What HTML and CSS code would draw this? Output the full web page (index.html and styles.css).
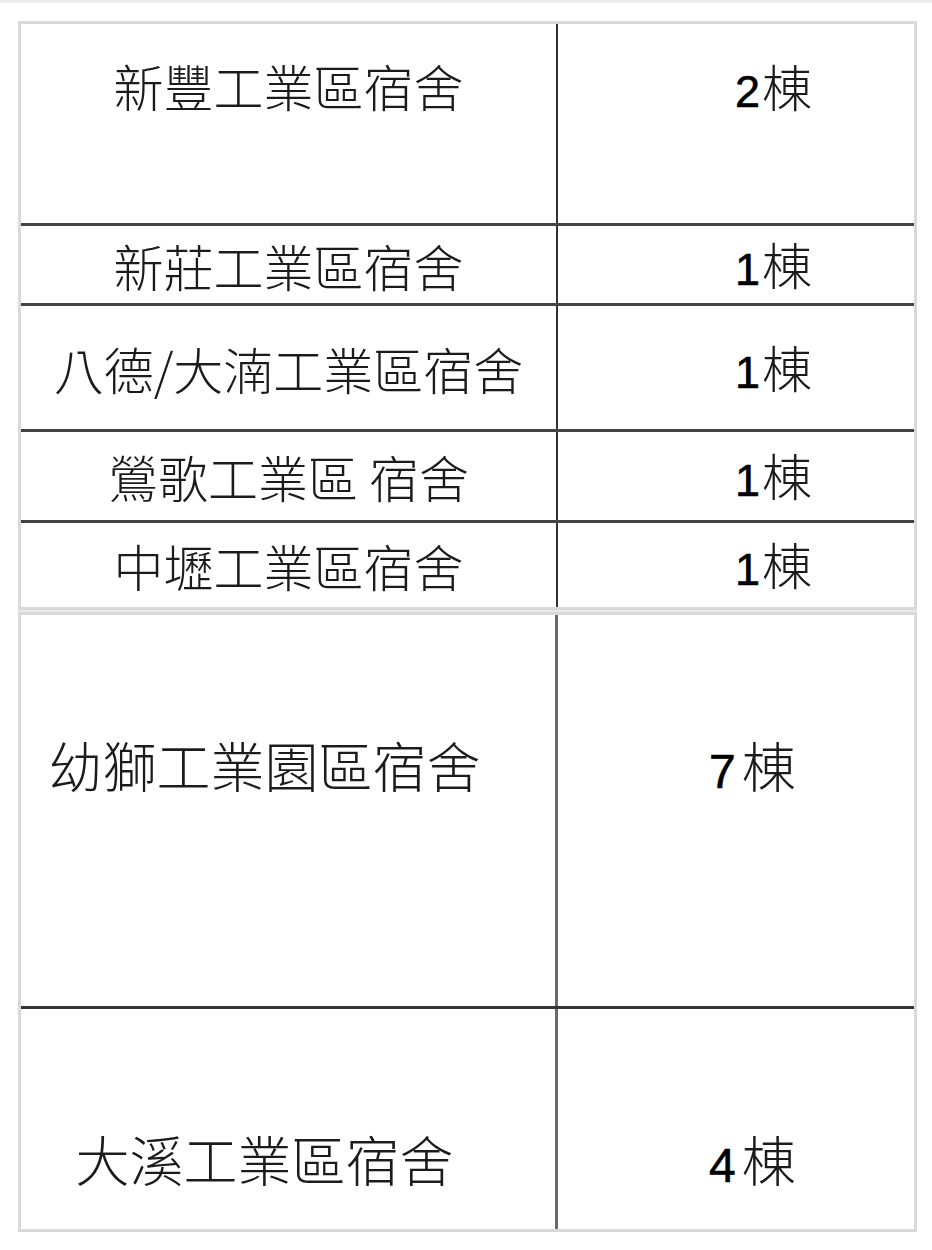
FILE: index.html
```html
<!DOCTYPE html>
<html lang="zh-Hant">
<head>
<meta charset="utf-8">
<title>工業區宿舍</title>
<link rel="stylesheet" href="styles.css">
</head>
<body>
<div class="topbar"></div>
<div class="sheet sheet-a">
  <div class="row r1 top">
    <div class="name">新豐工業區宿舍</div>
    <div class="count"><span class="val"><span class="num">2</span>棟</span></div>
  </div>
  <div class="row r2">
    <div class="name">新莊工業區宿舍</div>
    <div class="count"><span class="val"><span class="num">1</span>棟</span></div>
  </div>
  <div class="row r3">
    <div class="name">八德/大湳工業區宿舍</div>
    <div class="count"><span class="val"><span class="num">1</span>棟</span></div>
  </div>
  <div class="row r4">
    <div class="name">鶯歌工業區 宿舍</div>
    <div class="count"><span class="val"><span class="num">1</span>棟</span></div>
  </div>
  <div class="row r5">
    <div class="name">中壢工業區宿舍</div>
    <div class="count"><span class="val"><span class="num">1</span>棟</span></div>
  </div>
</div>
<div class="sheet-gap"></div>
<div class="sheet sheet-b">
  <div class="row r6 top">
    <div class="name">幼獅工業園區宿舍</div>
    <div class="count"><span class="val"><span class="num">7</span>棟</span></div>
  </div>
  <div class="row r7 top">
    <div class="name">大溪工業區宿舍</div>
    <div class="count"><span class="val"><span class="num">4</span>棟</span></div>
  </div>
</div>
</body>
</html>
```
FILE: styles.css
```css
html, body {
  margin: 0;
  padding: 0;
  background: #ffffff;
}
body {
  font-family: "Noto Sans CJK TC", "Noto Sans CJK SC", sans-serif;
  font-weight: 300;
  color: #1b1b1b;
}
.topbar {
  height: 3px;
  background: #ececec;
}
.sheet {
  margin-left: 18px;
  width: 899px;
  box-sizing: border-box;
  border: 3px solid #d9d9d9;
}
.sheet-a {
  margin-top: 18px;
  font-size: 50px;
}
.sheet-gap {
  margin-left: 18px;
  width: 899px;
  height: 2px;
  background: #e9e9e9;
}
.sheet-b {
  font-size: 54px;
}
.row {
  display: flex;
  box-sizing: border-box;
  border-bottom: 3px solid #444444;
}
.row:last-child {
  border-bottom: 0;
}
.r1 { height: 202px; }
.r2 { height: 80px; }
.r3 { height: 126px; }
.r4 { height: 91px; }
.r5 { height: 84px; }
.r6 { height: 394px; border-bottom-color: #353535; }
.r7 { height: 220px; }

.name {
  box-sizing: border-box;
  width: 535px;
  display: flex;
  align-items: center;
  justify-content: center;
  line-height: 1;
  white-space: pre;
}
.count {
  box-sizing: border-box;
  flex: 1;
  display: flex;
  align-items: center;
  border-left: 2px solid #333333;
  padding-left: 177px;
  line-height: 1;
}
.val {
  white-space: nowrap;
}
.num {
  font-family: "Liberation Sans", Arial, sans-serif;
  font-weight: 400;
  font-size: 45px;
  line-height: 1;
  margin-right: 2px;
  color: #000000;
  -webkit-text-stroke: 0.6px #000000;
}
.r1 .name, .r1 .count {
  align-items: flex-start;
  padding-top: 36px;
}
.sheet-b .name {
  width: 534px;
  padding-right: 47px;
}
.sheet-b .count {
  border-left: 3px solid #6a6a6a;
  padding-left: 151px;
}
.sheet-b .num {
  font-size: 48px;
  margin-right: 6px;
}
.r6 .name, .r6 .count, .r7 .name, .r7 .count {
  align-items: flex-start;
  padding-top: 123px;
}
```
